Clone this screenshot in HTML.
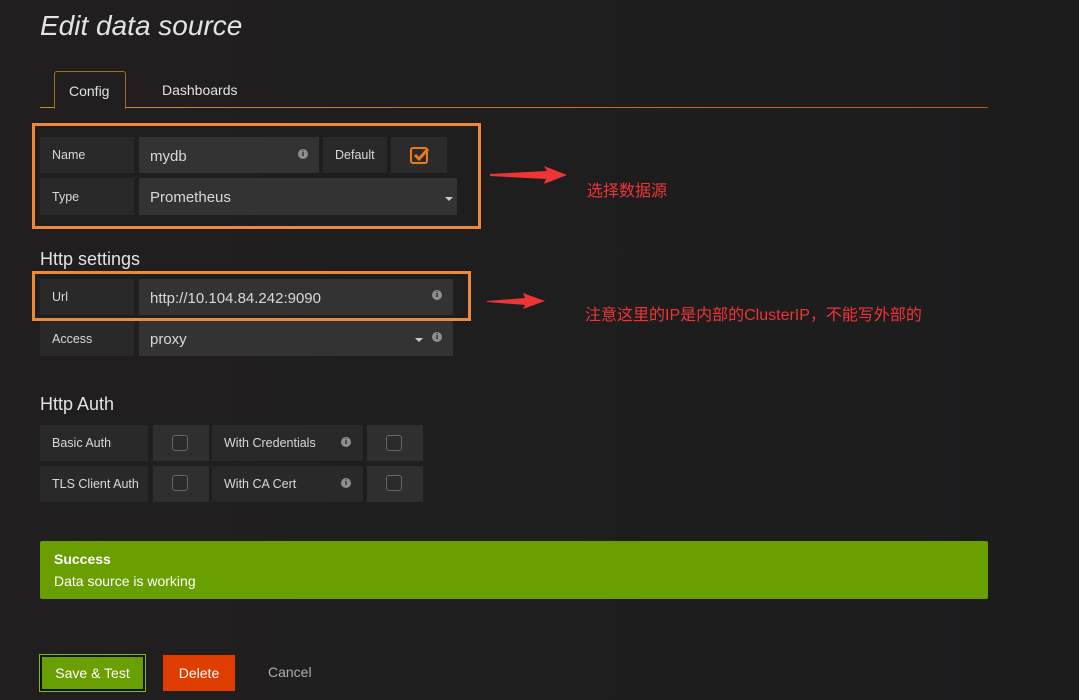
<!DOCTYPE html>
<html><head><meta charset="utf-8"><style>
*{margin:0;padding:0;box-sizing:border-box}
body{width:1079px;height:700px;overflow:hidden;background:linear-gradient(90deg,#201e1f 0%,#1e1d1e 85%,#1b1b1c 96.7%,#1c1c1d 100%);font-family:"Liberation Sans",sans-serif;color:#d8d9da;position:relative;font-size:13px}
.a{position:absolute}
.lbl{background:#292929;color:#d8d9da;font-size:12.5px;display:flex;align-items:center;padding-left:12px}
.inp{background:#333;color:#d8d9da;font-size:15px;display:flex;align-items:center;padding-left:11px;padding-top:2px}
.info{position:absolute;width:10px;height:10px;border-radius:50%;background:#8e8e8e;color:#222;font-size:8px;font-weight:bold;text-align:center;line-height:10px;font-family:"Liberation Serif",serif}
.cb{position:absolute;width:16px;height:16px;border:1px solid #666;border-radius:3px;background:#2b2b2b}
.caret{position:absolute;width:0;height:0;border-left:4px solid transparent;border-right:4px solid transparent;border-top:4px solid #ccc}
.red{color:#ee3535;font-family:"Liberation Sans","Noto Sans CJK SC",sans-serif;font-size:16px}
</style></head><body>
<div class="a" style="left:40px;top:10px;font-size:28px;font-style:italic;color:#e3e3e3">Edit data source</div>
<div class="a" style="left:40px;top:107px;width:948px;height:1px;background:linear-gradient(90deg,#d08a1e,#c8521a)"></div>
<div class="a" style="left:54px;top:71px;width:72px;height:38px;border:1px solid #a86d1c;border-bottom:none;border-radius:3px 3px 0 0;background:#201e1f"></div>
<div class="a" style="left:69px;top:83px;font-size:14px;color:#e3e3e3">Config</div>
<div class="a" style="left:162px;top:82px;font-size:14px;color:#e3e3e3">Dashboards</div>

<div class="a" style="left:32px;top:123px;width:449px;height:106px;border:3px solid #f0883a"></div>
<div class="a lbl" style="left:40px;top:137px;width:94px;height:36px">Name</div>
<div class="a inp" style="left:139px;top:137px;width:180px;height:36px">mydb</div>
<div class="info" style="left:298px;top:149px">i</div>
<div class="a lbl" style="left:323px;top:137px;width:64px;height:36px">Default</div>
<div class="a" style="left:391px;top:137px;width:56px;height:36px;background:#2b2b2b"></div>
<div class="a" style="left:410px;top:147px;width:18px;height:17px;border:2px solid #eb7b18;border-radius:3px"></div>
<svg class="a" style="left:410px;top:143px" width="22" height="20"><path d="M5 12 L9 16 L18 6" stroke="#eb7b18" stroke-width="3" fill="none"/></svg>
<div class="a lbl" style="left:40px;top:178px;width:94px;height:37px">Type</div>
<div class="a inp" style="left:139px;top:178px;width:318px;height:37px">Prometheus</div>
<div class="caret" style="left:445px;top:197px"></div>

<div class="a" style="left:40px;top:249px;font-size:18px;color:#e3e3e3">Http settings</div>
<div class="a" style="left:32px;top:271px;width:439px;height:50px;border:3px solid #f0883a"></div>
<div class="a lbl" style="left:40px;top:279px;width:94px;height:36px">Url</div>
<div class="a inp" style="left:139px;top:279px;width:314px;height:36px">http://10.104.84.242:9090</div>
<div class="info" style="left:432px;top:290px">i</div>
<div class="a lbl" style="left:40px;top:321px;width:94px;height:35px">Access</div>
<div class="a inp" style="left:139px;top:321px;width:314px;height:35px">proxy</div>
<div class="caret" style="left:415px;top:338px"></div>
<div class="info" style="left:432px;top:332px">i</div>

<div class="a" style="left:40px;top:394px;font-size:18px;color:#e3e3e3">Http Auth</div>
<div class="a lbl" style="left:40px;top:425px;width:108px;height:36px">Basic Auth</div>
<div class="a" style="left:153px;top:425px;width:56px;height:36px;background:#2f2f2f"></div><div class="cb" style="left:172px;top:435px"></div>
<div class="a lbl" style="left:212px;top:425px;width:151px;height:36px">With Credentials</div><div class="info" style="left:341px;top:437px">i</div>
<div class="a" style="left:367px;top:425px;width:56px;height:36px;background:#2f2f2f"></div><div class="cb" style="left:386px;top:435px"></div>
<div class="a lbl" style="left:40px;top:466px;width:108px;height:36px">TLS Client Auth</div>
<div class="a" style="left:153px;top:466px;width:56px;height:36px;background:#2f2f2f"></div><div class="cb" style="left:172px;top:475px"></div>
<div class="a lbl" style="left:212px;top:466px;width:151px;height:36px">With CA Cert</div><div class="info" style="left:341px;top:478px">i</div>
<div class="a" style="left:367px;top:466px;width:56px;height:36px;background:#2f2f2f"></div><div class="cb" style="left:386px;top:475px"></div>

<div class="a" style="left:40px;top:541px;width:948px;height:58px;background:#699f00;border-radius:2px;color:#fff;padding:7px 14px;font-size:14px;line-height:22px"><b style="font-size:14px">Success</b><br>Data source is working</div>

<div class="a" style="left:40px;top:655px;width:105px;height:36px;background:#699f00;border:2px solid #111;outline:1px solid #7fbf00;color:#fff;font-size:14px;display:flex;align-items:center;justify-content:center">Save &amp; Test</div>
<div class="a" style="left:163px;top:655px;width:72px;height:36px;background:#e03d00;color:#fff;font-size:14px;display:flex;align-items:center;justify-content:center">Delete</div>
<div class="a" style="left:268px;top:664px;font-size:14px;color:#a8adb5">Cancel</div>

<svg class="a" style="left:487px;top:165px" width="80" height="22"><polygon points="3,9 60,6 57,1 80,10 57,19 59,14 3,11" fill="#ee3535"/></svg>
<div class="a red" style="left:587px;top:177px">选择数据源</div>
<svg class="a" style="left:485px;top:292px" width="62" height="20"><polygon points="2,9 40,6 38,1 60,9 38,17 40,13 2,10" fill="#ee3535"/></svg>
<div class="a red" style="left:585px;top:301px">注意这里的IP是内部的ClusterIP，不能写外部的</div>
</body></html>
